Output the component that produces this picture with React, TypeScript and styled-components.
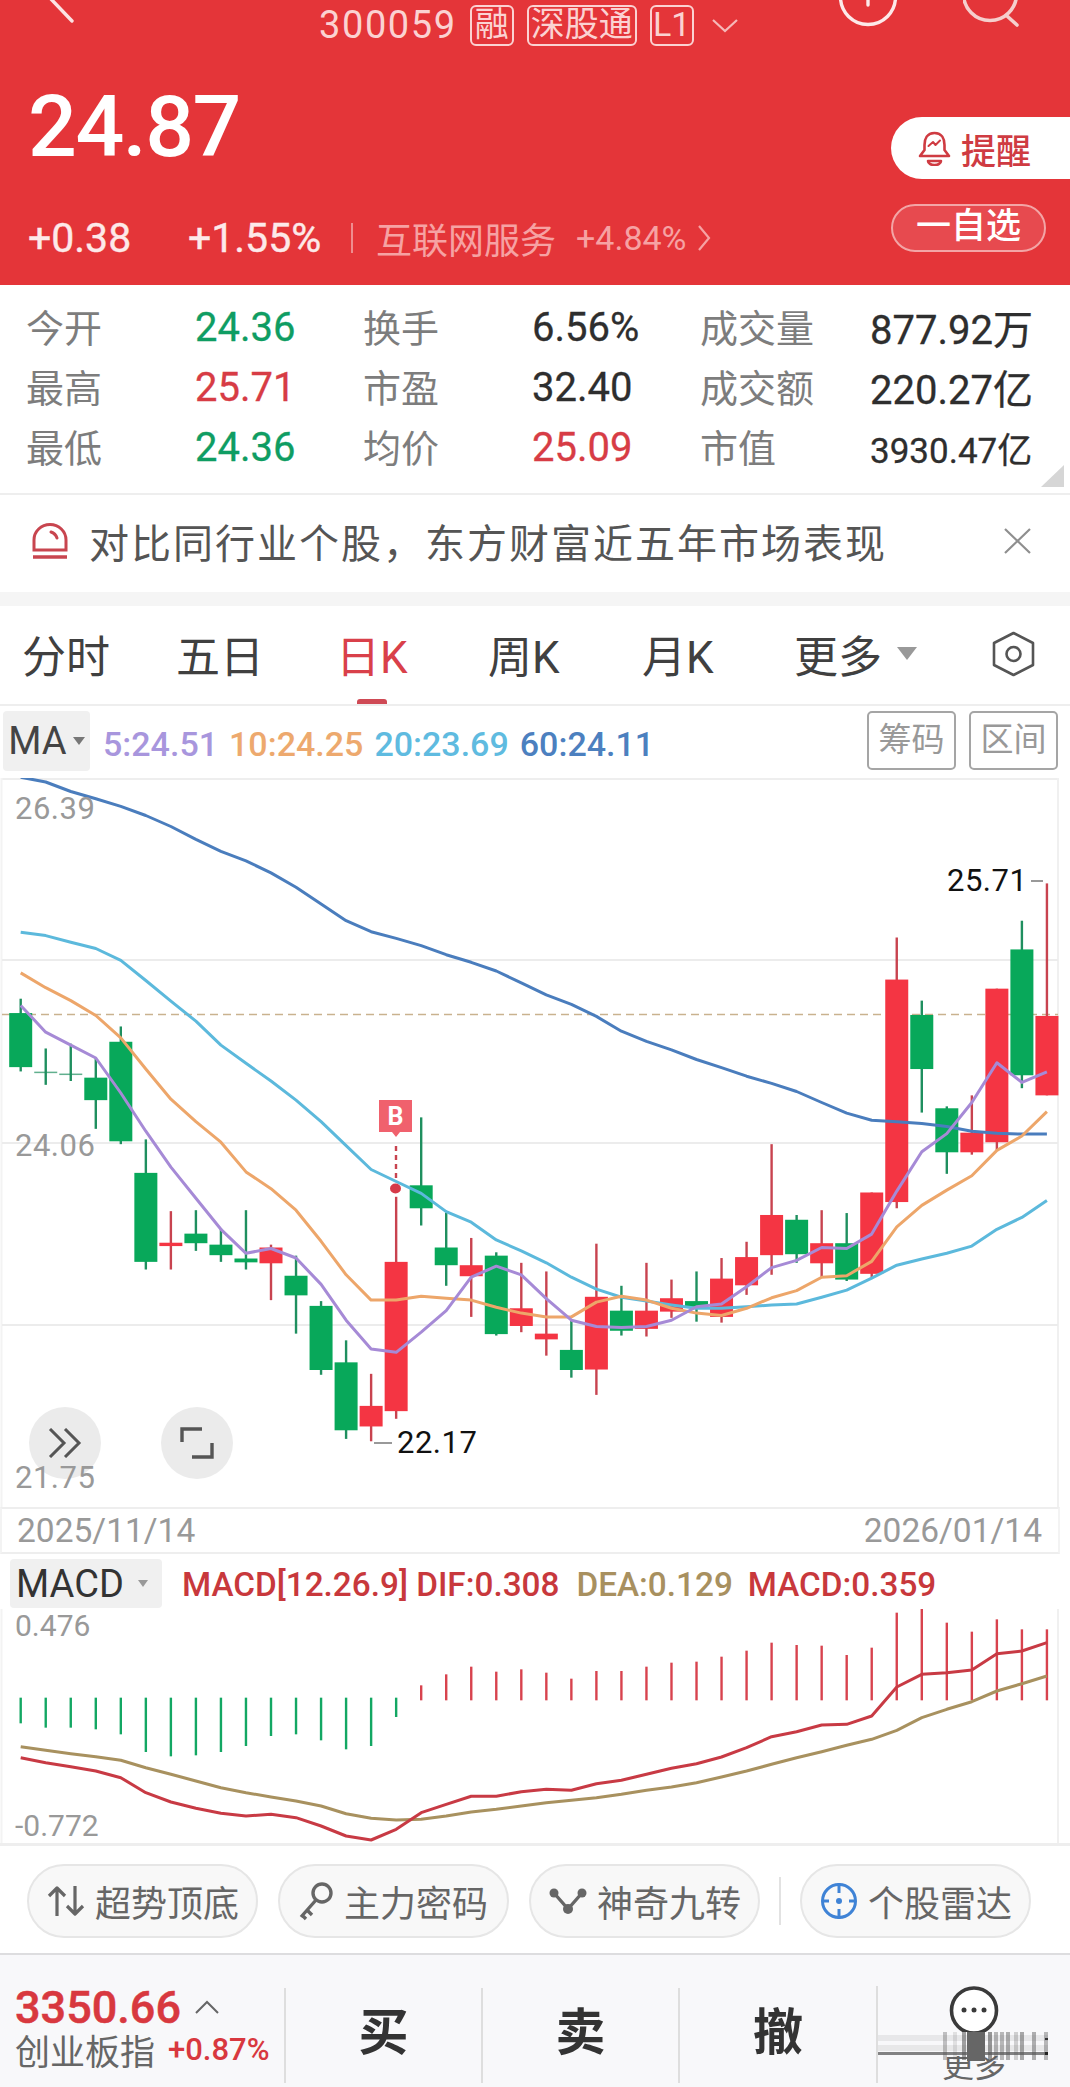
import React from "react";
import styled, { createGlobalStyle } from "styled-components";

const GlobalStyle = createGlobalStyle`
  html, body {
    margin: 0;
    padding: 0;
    background: #fff;
    font-family: Roboto, "Noto Sans CJK SC", sans-serif;
  }
  * { box-sizing: border-box; }
`;

const Page = styled.div`
  width: 1070px;
  height: 2087px;
  overflow: hidden;
  background: #fff;
  display: flex;
  flex-direction: column;
`;

/* ---------- red header ---------- */
const Header = styled.header`
  height: 285px;
  background: #e43539;
  color: #fff;
  display: flex;
  flex-direction: column;
  flex-shrink: 0;
`;

const TopBar = styled.div`
  height: 50px;
  display: flex;
  align-items: flex-start;
  padding-left: 48px;
`;

const Code = styled.span`
  margin-left: 241px;
  font-size: 38px;
  line-height: 50px;
  letter-spacing: 1.6px;
  color: #fbd2d2;
`;

const Badge = styled.span<{ $w: number }>`
  width: ${(p) => p.$w}px;
  height: 41px;
  margin-top: 5px;
  margin-left: 13px;
  border: 2px solid #fbd2d2;
  border-radius: 6px;
  color: #fbd2d2;
  font-size: 34px;
  line-height: 35px;
  text-align: center;
  white-space: nowrap;
  overflow: hidden;
`;

const TopIcons = styled.div`
  margin-left: auto;
  display: flex;
`;

const HeaderBody = styled.div`
  flex: 1;
  display: flex;
  justify-content: space-between;
`;

const PriceCol = styled.div`
  padding: 29px 0 0 28px;
  display: flex;
  flex-direction: column;
`;

const Price = styled.div`
  font-size: 86px;
  line-height: 96px;
  font-weight: 500;
  letter-spacing: -1.5px;
`;

const ChangeRow = styled.div`
  margin-top: 46px;
  display: flex;
  align-items: center;
  height: 34px;
`;

const Change = styled.span<{ $w: number }>`
  width: ${(p) => p.$w}px;
  font-size: 41px;
  color: #fde9e9;
  -webkit-text-stroke: 0.4px #fde9e9;
`;

const ChangeSep = styled.i`
  width: 2px;
  height: 30px;
  background: #ef8d8f;
  margin: 0 23px 0 0;
`;

const Sector = styled.span<{ $size: number; $gap?: number }>`
  font-size: ${(p) => p.$size}px;
  margin-left: ${(p) => p.$gap ?? 0}px;
  color: #f6a2a3;
  white-space: nowrap;
`;

const PillCol = styled.div`
  width: 179px;
  padding-top: 67px;
  display: flex;
  flex-direction: column;
`;

const RemindPill = styled.div`
  height: 62px;
  border-radius: 31px 0 0 31px;
  background: #fff;
  color: #cf3b42;
  display: flex;
  align-items: center;
  padding-left: 27px;
  gap: 10px;
  font-size: 35px;
  font-weight: 500;
`;

const WatchPill = styled.div`
  width: 155px;
  height: 48px;
  margin-top: 25px;
  border-radius: 24px;
  border: 2px solid #f3a5a6;
  background: #e74a4f;
  color: #fff;
  font-size: 35px;
  line-height: 42px;
  text-align: center;
  font-weight: 500;
`;

/* ---------- quote table ---------- */
const Stats = styled.section`
  position: relative;
  height: 210px;
  flex-shrink: 0;
  padding: 10px 0 0 26px;
  border-bottom: 2px solid #eeeeee;
  display: grid;
  grid-template-columns: 169px 168px 169px 168px 170px 170px;
  grid-auto-rows: 60px;
  align-items: center;
`;

const Label = styled.span`
  font-size: 38px;
  color: #7d7d7d;
`;

const Value = styled.span<{ $color?: string; $size?: number }>`
  padding-top: 4px;
  font-size: ${(p) => p.$size ?? 40}px;
  color: ${(p) => p.$color ?? "#2e2e2e"};
  white-space: nowrap;
  -webkit-text-stroke: 0.3px ${(p) => p.$color ?? "#2e2e2e"};
`;

const Fold = styled.i`
  position: absolute;
  right: 6px;
  bottom: 6px;
  width: 0;
  height: 0;
  border-style: solid;
  border-width: 0 0 22px 23px;
  border-color: transparent transparent #d6d6d6 transparent;
`;

/* ---------- banner ---------- */
const Banner = styled.section`
  height: 97px;
  flex-shrink: 0;
  display: flex;
  align-items: center;
  padding: 0 0 5px 32px;
  gap: 21px;
`;

const BannerText = styled.span`
  flex: 1;
  font-size: 40px;
  letter-spacing: 2px;
  color: #555555;
  white-space: nowrap;
`;

const CloseWrap = styled.span`
  margin-right: 39px;
  display: flex;
`;

const Band = styled.div`
  height: 14px;
  flex-shrink: 0;
  background: #f5f5f5;
`;

/* ---------- period tabs ---------- */
const Tabs = styled.nav`
  height: 100px;
  flex-shrink: 0;
  padding: 0 0 0 22px;
  display: grid;
  grid-template-columns: 154px 160px 152px 154px 152px 198px 43px;
  align-items: center;
  border-bottom: 2px solid #eeeeee;
`;

const Tab = styled.span<{ $active?: boolean }>`
  position: relative;
  height: 100%;
  padding-bottom: 3px;
  display: flex;
  align-items: center;
  font-size: 44px;
  color: ${(p) => (p.$active ? "#d9404a" : "#404040")};
  ${(p) =>
    p.$active &&
    `&::after {
      content: "";
      position: absolute;
      left: 21px;
      bottom: 0;
      width: 30px;
      height: 5px;
      border-radius: 3px 3px 0 0;
      background: #cf4a55;
    }`}
`;

const Caret = styled.i<{ $w: number; $color: string }>`
  display: inline-block;
  width: 0;
  height: 0;
  border-style: solid;
  border-width: ${(p) => p.$w}px ${(p) => p.$w * 0.8}px 0;
  border-color: ${(p) => p.$color} transparent transparent;
`;

const TabCaret = styled(Caret)`
  margin-left: 15px;
`;

/* ---------- MA legend ---------- */
const MaRow = styled.div`
  height: 72px;
  flex-shrink: 0;
  display: flex;
  align-items: flex-start;
  padding: 5px 12px 0 3px;
`;

const Chip = styled.span<{ $w: number; $h: number }>`
  width: ${(p) => p.$w}px;
  height: ${(p) => p.$h}px;
  background: #f0f0f0;
  border-radius: 4px;
  display: flex;
  align-items: center;
  justify-content: center;
  gap: 6px;
  font-size: 38px;
  color: #444;
`;

const MacdChip = styled(Chip)`
  gap: 14px;
  padding-right: 8px;
`;

const MaLegend = styled.div`
  display: flex;
  gap: 11px;
  margin-left: 13px;
  height: 62px;
  padding-top: 4px;
  align-items: center;
`;

const MaValue = styled.span<{ $color: string }>`
  font-size: 34px;
  font-weight: 500;
  color: ${(p) => p.$color};
`;

const ChartBtn = styled.span<{ $first?: boolean }>`
  width: 89px;
  height: 59px;
  margin-left: ${(p) => (p.$first ? "auto" : "13px")};
  border: 2px solid #a5a5a5;
  border-radius: 5px;
  color: #999;
  font-size: 33px;
  line-height: 54px;
  text-align: center;
`;

/* ---------- charts ---------- */
const KPanel = styled.div`
  position: relative;
  height: 729px;
  flex-shrink: 0;
  display: flex;
`;

const KSvg = styled.svg`
  position: relative;
  z-index: 1;
`;

const RoundBtn = styled.span<{ $left: number }>`
  position: absolute;
  left: ${(p) => p.$left}px;
  top: 629px;
  width: 72px;
  height: 72px;
  border-radius: 50%;
  background: #ebebeb;
  display: flex;
  align-items: center;
  justify-content: center;
`;

const DateRow = styled.div`
  height: 47px;
  flex-shrink: 0;
  padding: 0 16px 0 15px;
  display: flex;
  align-items: center;
  justify-content: space-between;
  font-size: 33.5px;
  color: #999;
  border-top: 2px solid #eeeeee;
  border-bottom: 2px solid #eeeeee;
  border-left: 2px solid #f3f3f3;
  border-right: 2px solid #f3f3f3;
  margin-right: 10px;
`;

const MacdHead = styled.div`
  height: 55px;
  flex-shrink: 0;
  padding: 5px 0 0 10px;
  display: flex;
  align-items: flex-start;
`;

const MacdName = styled.span`
  color: #333;
`;

const MacdLegend = styled.div`
  margin-left: 20px;
  height: 50px;
  display: flex;
  align-items: center;
  font-size: 33.3px;
  font-weight: 500;
  white-space: nowrap;
`;

const MacdText = styled.span<{ $color: string; $gap?: number }>`
  color: ${(p) => p.$color};
  margin-left: ${(p) => p.$gap ?? 0}px;
`;

const MacdPanel = styled.div`
  height: 237px;
  flex-shrink: 0;
  display: flex;
  border-bottom: 3px solid #eeeeee;
`;

/* ---------- tool pills ---------- */
const Tools = styled.div`
  height: 109px;
  flex-shrink: 0;
  padding: 2px 0 0 27px;
  display: flex;
  align-items: center;
  gap: 20px;
  border-bottom: 2px solid #dddddf;
`;

const ToolPill = styled.span`
  width: 231px;
  height: 74px;
  border-radius: 37px;
  border: 2px solid #e6e6e6;
  background: #f8f8f8;
  color: #666;
  font-size: 36px;
  display: flex;
  align-items: center;
  gap: 10px;
  padding-left: 18px;
  white-space: nowrap;
`;

const ToolSep = styled.i`
  width: 2px;
  height: 48px;
  background: #e2e2e2;
  margin: 0 -1px;
`;

/* ---------- bottom bar ---------- */
const BottomBar = styled.footer`
  flex: 1;
  background: #f8f8fa;
  display: grid;
  grid-template-columns: 284px 197px 197px 198px 1fr;
  padding-top: 33px;
  padding-bottom: 15px;
`;

const IndexCell = styled.div`
  padding-left: 15px;
  display: flex;
  flex-direction: column;
`;

const IndexTop = styled.div`
  display: flex;
  align-items: center;
  gap: 14px;
  height: 38px;
  font-size: 45px;
  font-weight: 500;
  color: #d8383f;
  -webkit-text-stroke: 0.5px #d8383f;
`;

const IndexBottom = styled.div`
  margin-top: -2px;
  display: flex;
  align-items: center;
  gap: 13px;
  font-size: 35px;
  color: #666;
  white-space: nowrap;
`;

const IndexPct = styled.span`
  font-size: 31px;
  font-weight: 500;
  color: #d8383f;
`;

const ActionCell = styled.div`
  border-left: 2px solid #dedede;
  display: flex;
  align-items: center;
  justify-content: center;
  font-size: 50px;
  font-weight: 700;
  color: #333;
  padding-bottom: 16px;
`;

const MoreCell = styled.div`
  position: relative;
  border-left: 2px solid #dedede;
  display: flex;
  flex-direction: column;
  align-items: center;
  margin-top: -2px;
  font-size: 32px;
  color: #666;
`;

const MoreLabel = styled.span`
  margin-top: 14px;
  line-height: 34px;
`;

const Smudge = styled.svg`
  position: absolute;
  left: 0;
  top: 46px;
`;

/* ---------- chart data, traced in reference px ---------- */
const KX = (i: number) => 20.7 + 25.03 * i;
const KY = (v: number) => 770 + v / 2.09;
const MY = (v: number) => 1500 + v / 3;

// [wickTop, bodyTop, bodyBottom, wickBottom, isUp]
const candles: [number, number, number, number, number][] = [
  [478, 508, 621, 630, 0], [582, 632, 635, 658, 0], [572, 636, 638, 650, 0], [600, 643, 690, 750, 0],
  [536, 568, 776, 782, 0], [772, 842, 1028, 1044, 0], [922, 988, 995, 1044, 1], [920, 969, 989, 1005, 0],
  [958, 992, 1014, 1028, 0], [920, 1021, 1029, 1044, 0], [992, 998, 1031, 1108, 1], [1015, 1057, 1098, 1178, 0],
  [1110, 1120, 1254, 1264, 0], [1192, 1238, 1380, 1398, 0], [1262, 1329, 1372, 1403, 1], [892, 1028, 1340, 1356, 1],
  [726, 868, 916, 952, 0], [925, 998, 1035, 1078, 0], [978, 1035, 1058, 1143, 1], [1008, 1015, 1179, 1182, 0],
  [1030, 1125, 1162, 1175, 1], [1048, 1178, 1190, 1224, 1], [1150, 1212, 1254, 1270, 0], [990, 1101, 1253, 1306, 1],
  [1078, 1130, 1172, 1182, 0], [1030, 1130, 1168, 1184, 1], [1065, 1104, 1132, 1145, 1], [1048, 1110, 1122, 1153, 0],
  [1020, 1063, 1143, 1155, 1], [986, 1018, 1077, 1097, 1], [782, 930, 1014, 1055, 1], [930, 940, 1012, 1030, 0],
  [920, 989, 1031, 1060, 1], [926, 989, 1065, 1068, 0], [883, 883, 1053, 1060, 1], [350, 438, 903, 916, 1],
  [482, 512, 625, 716, 0], [703, 707, 799, 844, 0], [680, 758, 799, 804, 1], [457, 457, 778, 795, 1],
  [315, 375, 638, 665, 0], [237, 514, 680, 680, 1],
];

const ma60 = [15, 25, 45, 60, 76, 95, 118, 145, 170, 190, 215, 245, 280, 315, 338, 352, 367, 386, 402, 420, 445, 470, 490, 515, 546, 567, 585, 605, 622, 640, 655, 672, 695, 717, 732, 735, 739, 745, 755, 759, 761, 761];
const ma20 = [339, 346, 360, 373, 398, 440, 483, 525, 575, 613, 650, 690, 735, 785, 835, 860, 885, 923, 945, 982, 1005, 1030, 1060, 1085, 1102, 1110, 1118, 1125, 1125, 1122, 1118, 1116, 1102, 1087, 1062, 1035, 1022, 1010, 995, 960, 935, 900];
const ma10 = [424, 455, 482, 513, 560, 625, 688, 735, 778, 840, 875, 920, 985, 1055, 1108, 1108, 1100, 1104, 1108, 1123, 1135, 1143, 1143, 1112, 1100, 1108, 1125, 1135, 1140, 1125, 1103, 1088, 1060, 1057, 1027, 955, 910, 878, 848, 795, 765, 714];
const ma5 = [492, 548, 575, 602, 675, 755, 830, 895, 960, 1010, 1000, 1020, 1075, 1150, 1210, 1217, 1175, 1130, 1060, 1037, 1055, 1105, 1150, 1163, 1165, 1163, 1150, 1122, 1116, 1080, 1040, 1025, 998, 1000, 970, 880, 798, 760, 695, 612, 653, 631];

const greenBars = [667, 680, 680, 685, 700, 753, 766, 763, 753, 735, 705, 700, 718, 745, 735, 648];
const redBars = [553, 520, 497, 512, 505, 515, 533, 510, 510, 497, 485, 482, 467, 449, 425, 432, 434, 462, 440, 335, 320, 365, 392, 355, 385, 385];
const dif = [770, 785, 797, 810, 830, 875, 903, 922, 937, 945, 940, 950, 975, 1005, 1017, 985, 935, 910, 886, 886, 872, 865, 868, 848, 838, 820, 802, 788, 768, 740, 707, 692, 672, 670, 645, 558, 520, 515, 507, 458, 450, 425];
const dea = [737, 748, 758, 767, 778, 800, 820, 840, 860, 875, 888, 900, 915, 938, 952, 957, 955, 945, 933, 925, 915, 905, 898, 890, 880, 868, 858, 845, 828, 810, 790, 770, 752, 733, 715, 688, 650, 625, 602, 570, 548, 525];

const linePath = (vals: number[], fy: (v: number) => number) =>
  vals.map((v, i) => `${i ? "L" : "M"}${KX(i).toFixed(1)} ${fy(v).toFixed(1)}`).join(" ");

const KLine = () => (
  <KSvg width="1070" height="729" viewBox="0 778 1070 729">
    <line x1="2" y1="779" x2="1058" y2="779" stroke="#eeeeee" strokeWidth="2" />
    <line x1="1.5" y1="778" x2="1.5" y2="1507" stroke="#f3f3f3" strokeWidth="2" />
    <line x1="1058" y1="778" x2="1058" y2="1507" stroke="#f0f0f0" strokeWidth="2" />
    {[960, 1143, 1325].map((y) => (
      <line key={y} x1="2" y1={y} x2="1058" y2={y} stroke="#ececec" strokeWidth="2" />
    ))}
    <line x1="2" y1="1014.5" x2="1058" y2="1014.5" stroke="#c9b28f" strokeWidth="1.5" strokeDasharray="8 5" />
    {candles.map(([wt, bt, bb, wb, up], i) => {
      const x = KX(i);
      const body = up ? "#f43543" : "#08a85a";
      const wick = up ? "#c8434f" : "#1f8f5f";
      const h = KY(bb) - KY(bt);
      return (
        <g key={i}>
          <line x1={x} y1={KY(wt)} x2={x} y2={KY(wb)} stroke={wick} strokeWidth="2.4" />
          {h > 2 ? (
            <rect x={x - 11.5} y={KY(bt)} width="23" height={h} fill={body} />
          ) : (
            <line x1={x - 11.5} y1={KY(bt)} x2={x + 11.5} y2={KY(bt)} stroke={wick} strokeWidth="1.5" opacity="0.7" />
          )}
        </g>
      );
    })}
    <path d={linePath(ma60, KY)} fill="none" stroke="#4a7dbd" strokeWidth="3" strokeLinejoin="round" />
    <path d={linePath(ma20, KY)} fill="none" stroke="#5cb9dc" strokeWidth="3" strokeLinejoin="round" />
    <path d={linePath(ma10, KY)} fill="none" stroke="#eda66a" strokeWidth="3" strokeLinejoin="round" />
    <path d={linePath(ma5, KY)} fill="none" stroke="#a68ad6" strokeWidth="3" strokeLinejoin="round" />

    <path d="M379 1100 H412 V1132 H400 L396 1137 L392 1132 H379 Z" fill="#f0616d" />
    <text x="395.5" y="1125" textAnchor="middle" fontSize="25" fontWeight="700" fill="#fff" fontFamily="Roboto, sans-serif">B</text>
    <line x1="396" y1="1146" x2="396" y2="1181" stroke="#c8434f" strokeWidth="2.4" strokeDasharray="5 4" />
    <ellipse cx="395.5" cy="1188.5" rx="5.5" ry="5" fill="#d63a48" />

    <g fontFamily="Roboto, sans-serif" fontSize="31" letterSpacing="0.5">
      <text x="15" y="819" fill="#999">26.39</text>
      <text x="15" y="1156" fill="#999">24.06</text>
      <text x="15" y="1488" fill="#999">21.75</text>
      <text x="397" y="1453" fill="#111">22.17</text>
      <text x="947" y="891" fill="#111">25.71</text>
    </g>
    <line x1="374" y1="1443" x2="392" y2="1443" stroke="#777" strokeWidth="1.5" />
    <line x1="1031" y1="881" x2="1043" y2="881" stroke="#777" strokeWidth="1.5" />
  </KSvg>
);

const MacdChart = () => (
  <svg width="1070" height="234" viewBox="0 1608 1070 234">
    <line x1="1.5" y1="1600" x2="1.5" y2="1842" stroke="#f3f3f3" strokeWidth="2" />
    <line x1="1058" y1="1600" x2="1058" y2="1842" stroke="#f0f0f0" strokeWidth="2" />
    {greenBars.map((b, i) => (
      <line key={i} x1={KX(i)} y1={MY(590)} x2={KX(i)} y2={MY(b)} stroke="#13a763" strokeWidth="2.4" />
    ))}
    {redBars.map((t, i) => (
      <line key={i} x1={KX(i + 16)} y1={MY(t)} x2={KX(i + 16)} y2={MY(598)} stroke="#d8434e" strokeWidth="2.4" />
    ))}
    <path d={linePath(dea, MY)} fill="none" stroke="#a8915f" strokeWidth="3" strokeLinejoin="round" />
    <path d={linePath(dif, MY)} fill="none" stroke="#c83a44" strokeWidth="3" strokeLinejoin="round" />
    <g fontFamily="Roboto, sans-serif" fontSize="30" fill="#999">
      <text x="15" y="1635">0.476</text>
      <text x="15" y="1835">-0.772</text>
    </g>
  </svg>
);

const BackIcon = () => (
  <svg width="30" height="30" viewBox="0 0 30 30" fill="none" stroke="#fce3e3" strokeWidth="3.4" strokeLinecap="round">
    <path d="M3 -1 L24 21" />
  </svg>
);

const ChevronDown = () => (
  <svg width="26" height="14" viewBox="0 0 26 14" fill="none" stroke="#f6b8b8" strokeWidth="2.2" style={{ marginTop: 19, marginLeft: 18 }}>
    <path d="M1 1 L13 12 L25 1" />
  </svg>
);

const SectorChevron = () => (
  <svg width="13" height="26" viewBox="0 0 13 26" fill="none" stroke="#f6a2a3" strokeWidth="2.2" style={{ marginLeft: 11 }}>
    <path d="M1 1 L11 13 L1 25" />
  </svg>
);

const PlusIcon = () => (
  <svg width="60" height="30" viewBox="0 0 60 30" fill="none" stroke="#fde9e9" strokeWidth="3.4">
    <circle cx="30" cy="-3" r="27.5" />
    <line x1="30" y1="0" x2="30" y2="5" strokeLinecap="round" />
  </svg>
);

const SearchIcon = () => (
  <svg width="60" height="30" viewBox="0 0 60 30" fill="none" stroke="#f5cfcd" strokeWidth="3.6" style={{ marginLeft: 65, marginRight: 47 }}>
    <circle cx="27" cy="-6" r="26.5" />
    <line x1="44" y1="16" x2="54" y2="25" strokeLinecap="round" />
  </svg>
);

const BellIcon = () => (
  <svg width="33" height="35" viewBox="0 0 33 35" fill="none" stroke="#cf3b42" strokeWidth="2.6" strokeLinejoin="round">
    <path d="M16.5 2 C9 2 6.5 8 6.5 14 V19 L2 25 H31 L26.5 19 V14 C26.5 8 24 2 16.5 2 Z" />
    <path d="M10 30 H23 A6.5 4 0 0 1 10 30 Z" />
    <path d="M10.5 15 L15 11 L17.5 14 L22 9.5" strokeWidth="2" strokeLinecap="round" />
  </svg>
);

const SirenIcon = () => (
  <svg width="36" height="37" viewBox="0 0 36 37" fill="none" stroke="#c8454f" strokeWidth="3">
    <path d="M2 27 V17 A16 15.5 0 0 1 34 17 V27 Z" />
    <path d="M19 9 C22 10 24 12 25 15" strokeLinecap="round" />
    <line x1="1" y1="34" x2="35" y2="34" strokeWidth="3.6" />
  </svg>
);

const CloseIcon = () => (
  <svg width="27" height="26" viewBox="0 0 27 26" fill="none" stroke="#8f8f8f" strokeWidth="2.2">
    <path d="M1 1 L26 25 M26 1 L1 25" />
  </svg>
);

const HexIcon = () => (
  <svg width="43" height="46" viewBox="0 0 43 46" fill="none" stroke="#555" strokeWidth="2.6" strokeLinejoin="round">
    <path d="M21.5 2 L41 12 V34 L21.5 44 L2 34 V12 Z" />
    <circle cx="21.5" cy="23" r="7" />
  </svg>
);

const DoubleChevron = () => (
  <svg width="34" height="30" viewBox="0 0 34 30" fill="none" stroke="#555" strokeWidth="3">
    <path d="M2 1 L16 15 L2 29 M17 1 L31 15 L17 29" />
  </svg>
);

const ExpandIcon = () => (
  <svg width="34" height="32" viewBox="0 0 34 32" fill="none" stroke="#555" strokeWidth="3.4">
    <path d="M2 15 V2 H22 M32 16 V30 H12" />
  </svg>
);

const TrendIcon = () => (
  <svg width="38" height="32" viewBox="0 0 38 32" fill="none" stroke="#666" strokeWidth="3.2" strokeLinejoin="round">
    <path d="M10 31 V3 M2 11 L10 3 L18 11" />
    <path d="M28 1 V29 M20 21 L28 29 L36 21" />
  </svg>
);

const KeyIcon = () => (
  <svg width="36" height="40" viewBox="0 0 36 40" fill="none" stroke="#666" strokeWidth="3.4">
    <circle cx="24" cy="12" r="9" />
    <path d="M18 19 L3 36 M9 29 L14 34 M4 34 L8 38" />
  </svg>
);

const NodesIcon = () => (
  <svg width="38" height="28" viewBox="0 0 38 28" fill="#666" stroke="#666" strokeWidth="3.4">
    <path d="M5 6 L19 22 L33 6" fill="none" />
    <circle cx="5" cy="6" r="4.5" stroke="none" />
    <circle cx="33" cy="6" r="4.5" stroke="none" />
    <circle cx="19" cy="22" r="5" stroke="none" />
  </svg>
);

const TargetIcon = () => (
  <svg width="38" height="38" viewBox="0 0 38 38" fill="none" stroke="#3f83d6" strokeWidth="3">
    <circle cx="19" cy="19" r="16.5" />
    <path d="M19 1 V11 M19 27 V37 M2 19 H9 M29 19 H36" />
    <circle cx="19" cy="19" r="3" fill="#3f83d6" stroke="none" />
  </svg>
);

const CaretUp = () => (
  <svg width="24" height="14" viewBox="0 0 24 14" fill="none" stroke="#666" strokeWidth="2">
    <path d="M1 13 L12 2 L23 13" />
  </svg>
);

const MoreIcon = () => (
  <svg width="50" height="49" viewBox="0 0 50 49" fill="none" stroke="#3a3a3a" strokeWidth="3.6">
    <circle cx="25" cy="24.5" r="22.5" fill="#fff" />
    <g fill="#3a3a3a" stroke="none">
      <circle cx="15" cy="24" r="2.5" />
      <circle cx="25" cy="24" r="2.5" />
      <circle cx="35" cy="24" r="2.5" />
    </g>
  </svg>
);

// smeared strip that sits across the 更多 button in the shot
const streaks: [number, number][] = [
  [65, 0.35], [75, 0.15], [84, 0.55], [110, 0.6], [116, 0.4],
  [122, 0.4], [128, 0.45], [136, 0.25], [142, 0.5], [154, 0.45], [166, 0.4],
];

const App = () => {
  return (
    <Page>
      <GlobalStyle />
      <Header>
        <TopBar>
          <BackIcon />
          <Code>300059</Code>
          <Badge $w={44}>融</Badge>
          <Badge $w={110}>深股通</Badge>
          <Badge $w={44}>L1</Badge>
          <ChevronDown />
          <TopIcons>
            <PlusIcon />
            <SearchIcon />
          </TopIcons>
        </TopBar>
        <HeaderBody>
          <PriceCol>
            <Price>24.87</Price>
            <ChangeRow>
              <Change $w={160}>+0.38</Change>
              <Change $w={163}>+1.55%</Change>
              <ChangeSep />
              <Sector $size={36}>互联网服务</Sector>
              <Sector $size={34} $gap={20}>+4.84%</Sector>
              <SectorChevron />
            </ChangeRow>
          </PriceCol>
          <PillCol>
            <RemindPill>
              <BellIcon />
              提醒
            </RemindPill>
            <WatchPill>一自选</WatchPill>
          </PillCol>
        </HeaderBody>
      </Header>

      <Stats>
        <Label>今开</Label>
        <Value $color="#0f9d63">24.36</Value>
        <Label>换手</Label>
        <Value>6.56%</Value>
        <Label>成交量</Label>
        <Value>877.92万</Value>
        <Label>最高</Label>
        <Value $color="#d73c45">25.71</Value>
        <Label>市盈</Label>
        <Value>32.40</Value>
        <Label>成交额</Label>
        <Value>220.27亿</Value>
        <Label>最低</Label>
        <Value $color="#0f9d63">24.36</Value>
        <Label>均价</Label>
        <Value $color="#d73c45">25.09</Value>
        <Label>市值</Label>
        <Value $size={35}>3930.47亿</Value>
        <Fold />
      </Stats>

      <Banner>
        <SirenIcon />
        <BannerText>对比同行业个股，东方财富近五年市场表现</BannerText>
        <CloseWrap>
          <CloseIcon />
        </CloseWrap>
      </Banner>
      <Band />

      <Tabs>
        <Tab>分时</Tab>
        <Tab>五日</Tab>
        <Tab $active>日K</Tab>
        <Tab>周K</Tab>
        <Tab>月K</Tab>
        <Tab>
          更多
          <TabCaret $w={13} $color="#999" />
        </Tab>
        <Tab>
          <HexIcon />
        </Tab>
      </Tabs>

      <MaRow>
        <Chip $w={87} $h={60}>
          MA
          <Caret $w={8} $color="#777" />
        </Chip>
        <MaLegend>
          <MaValue $color="#a896dd">5:24.51</MaValue>
          <MaValue $color="#eda96e">10:24.25</MaValue>
          <MaValue $color="#5fbbe0">20:23.69</MaValue>
          <MaValue $color="#4c80bf">60:24.11</MaValue>
        </MaLegend>
        <ChartBtn $first>筹码</ChartBtn>
        <ChartBtn>区间</ChartBtn>
      </MaRow>

      <KPanel>
        <KLine />
        <RoundBtn $left={29}>
          <DoubleChevron />
        </RoundBtn>
        <RoundBtn $left={161}>
          <ExpandIcon />
        </RoundBtn>
      </KPanel>

      <DateRow>
        <span>2025/11/14</span>
        <span>2026/01/14</span>
      </DateRow>

      <MacdHead>
        <MacdChip $w={152} $h={49}>
          <MacdName>MACD</MacdName>
          <Caret $w={7} $color="#999" />
        </MacdChip>
        <MacdLegend>
          <MacdText $color="#c8383c">MACD[12.26.9] DIF:0.308</MacdText>
          <MacdText $color="#a8905f" $gap={17}>DEA:0.129</MacdText>
          <MacdText $color="#c8383c" $gap={15}>MACD:0.359</MacdText>
        </MacdLegend>
      </MacdHead>
      <MacdPanel>
        <MacdChart />
      </MacdPanel>

      <Tools>
        <ToolPill>
          <TrendIcon />
          超势顶底
        </ToolPill>
        <ToolPill>
          <KeyIcon />
          主力密码
        </ToolPill>
        <ToolPill>
          <NodesIcon />
          神奇九转
        </ToolPill>
        <ToolSep />
        <ToolPill>
          <TargetIcon />
          个股雷达
        </ToolPill>
      </Tools>

      <BottomBar>
        <IndexCell>
          <IndexTop>
            3350.66
            <CaretUp />
          </IndexTop>
          <IndexBottom>
            创业板指
            <IndexPct>+0.87%</IndexPct>
          </IndexBottom>
        </IndexCell>
        <ActionCell>买</ActionCell>
        <ActionCell>卖</ActionCell>
        <ActionCell>撤</ActionCell>
        <MoreCell>
          <MoreIcon />
          <MoreLabel>更多</MoreLabel>
          <Smudge width="172" height="32" viewBox="0 0 172 32">
            <rect x="0" y="0" width="170" height="24" fill="#f8f8fa" />
            <rect x="0" y="3" width="170" height="6" fill="#999" opacity="0.18" />
            <rect x="0" y="13" width="170" height="6" fill="#888" opacity="0.14" />
            <rect x="0" y="20" width="170" height="3" fill="#333" opacity="0.6" />
            {streaks.map(([x, o]) => (
              <rect key={x} x={x} y="0" width="4" height="28" fill="#555" opacity={o} />
            ))}
            <rect x="89" y="0" width="18" height="29" fill="#666" />
            <rect x="167" y="20" width="3" height="3" fill="#222" />
            <rect x="167" y="6" width="3" height="2" fill="#333" />
          </Smudge>
        </MoreCell>
      </BottomBar>
    </Page>
  );
};

export default App;
